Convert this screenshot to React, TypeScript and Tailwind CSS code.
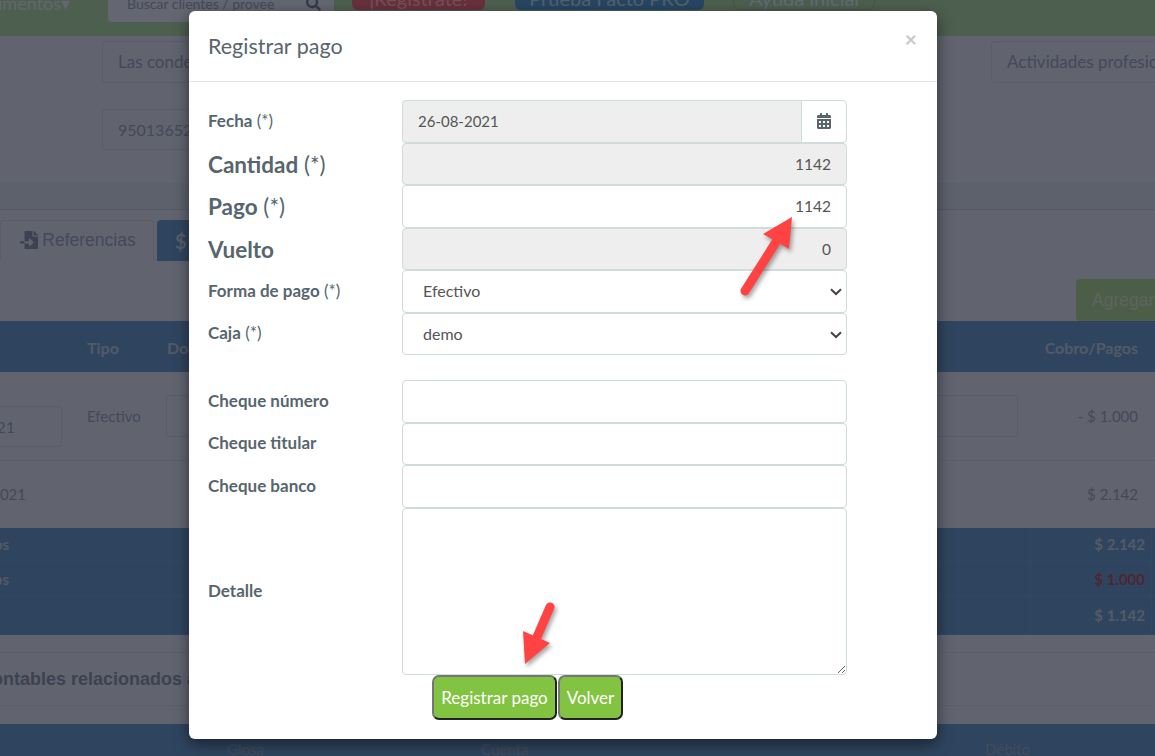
import React from "react";
import { FaCalendarAlt, FaFileImport, FaSearch } from "react-icons/fa";

const labelCls = "font-bold text-[#57666e]";
const inputCls =
  "h-[42.5px] w-full rounded-[4px] border border-[#cfdcdc] px-[15px] text-[15.5px] text-[#555] outline-none";

function Row({ label, big, req, children }: { label: string; big?: boolean; req?: boolean; children: React.ReactNode }) {
  return (
    <div className="grid grid-cols-[194px_445px] items-center">
      <div className={big ? "pt-[2px] text-[22.5px] text-[#57666e]" : "pb-[2px] text-[17px] text-[#57666e]"}>
        <span className={labelCls}>{label}</span>
        {req && " (*)"}
      </div>
      {children}
    </div>
  );
}

function Select({ value }: { value: string }) {
  return (
    <div className="relative">
      <select className={`${inputCls} appearance-none bg-white pl-[20px] text-[16px]`} defaultValue={value}>
        <option>{value}</option>
      </select>
      <svg className="pointer-events-none absolute right-[5px] top-[18px]" width="12" height="8" viewBox="0 0 12 8">
        <polyline points="1,1.2 6,6 11,1.2" fill="none" stroke="#444" strokeWidth="2" />
      </svg>
    </div>
  );
}

function Arrow({ className, points, shaft, w, h }: { className: string; points: string; shaft: string; w: number; h: number }) {
  return (
    <svg className={`${className} drop-shadow-[2px_3px_2px_rgba(0,0,0,0.35)]`} width={w} height={h} viewBox={`0 0 ${w} ${h}`}>
      <polygon points={points} fill="#ff4343" />
      <path d={shaft} stroke="#ff4343" strokeWidth="9" strokeLinecap="round" fill="none" />
    </svg>
  );
}

function Background() {
  return (
    <div className="h-[756px] w-full overflow-hidden bg-[#c2c8de] font-['Lato',sans-serif] text-[#8a90b4]">
      {/* top bar */}
      <div className="flex h-[36px] items-start overflow-hidden bg-[#9abe9e]">
        <div className="-mt-[10px] flex w-[108px] overflow-hidden text-[18px] text-[#c6cbe0]">
          <div className="flex w-[70px] justify-end overflow-hidden">
            <span className="whitespace-nowrap">Documentos▾</span>
          </div>
        </div>
        <div className="-mt-[20px] flex h-[42px] w-[226px] items-center justify-between rounded-[4px] bg-[#c8cde2] pl-[19px] pr-[13px] pt-[20px] text-[14px]">
          <span className="-mt-[16px] whitespace-nowrap">Buscar clientes / provee</span>
          <FaSearch className="-mt-[16px] text-[15px] text-[#70758f]" />
        </div>
        <div className="-mt-[18px] ml-[18px] flex h-[28px] w-[133px] items-center justify-center rounded-[6px] bg-[#d0607a] pt-[4px] text-[20px] text-[#e4a0b0]">
          ¡Regístrate!
        </div>
        <div className="-mt-[18px] ml-[30px] flex h-[28px] w-[189px] items-center justify-center rounded-[6px] bg-[#4f8cc4] pt-[4px] text-[20px] text-[#a4c0dc]">
          Prueba Facto PRO
        </div>
        <div className="-mt-[18px] ml-[29px] flex h-[28px] w-[142px] items-center justify-center rounded-[6px] border border-[#8aa890] pt-[4px] text-[20px] text-[#c8d2e6]">
          Ayuda inicial
        </div>
      </div>

      {/* form fields */}
      <div className="flex h-[147px] flex-col pt-[5px]">
        <div className="flex">
          <div className="ml-[102px] flex h-[42px] w-[300px] items-center rounded-[4px] border border-[#b4bad2] pl-[15px] text-[17px]">
            Las condes
          </div>
          <div className="ml-[589px] flex h-[42px] flex-1 items-center overflow-hidden whitespace-nowrap rounded-l-[4px] border border-r-0 border-[#b4bad2] pl-[15px] text-[17px]">
            Actividades profesionales
          </div>
        </div>
        <div className="ml-[102px] mt-[26px] flex h-[41px] w-[300px] items-center rounded-[4px] border border-[#b4bad2] pl-[15px] text-[16px]">
          950136522
        </div>
      </div>
      <div className="h-[27px] border-b border-[#acb2cc] bg-[#b8c2d8]" />

      {/* tabs */}
      <div className="flex h-[51px] items-end gap-[3px] pl-0">
        <div className="flex h-[41px] w-[154px] items-center justify-center gap-[4px] rounded-t-[4px] border border-b-0 border-[#b4bad2] pb-[2px] pl-[2px] font-['Liberation_Sans',sans-serif] text-[17.5px]">
          <FaFileImport className="text-[18px] text-[#7c82a2]" />
          Referencias
        </div>
        <div className="flex h-[41px] w-[200px] items-center rounded-t-[4px] bg-[#5e8abe] pl-[18px] text-[20px] font-bold text-[#b0bcd4]">
          $ Pagos
        </div>
      </div>

      {/* add button */}
      <div className="flex h-[60px] items-end justify-end">
        <div className="flex h-[42px] w-[79px] items-center overflow-hidden whitespace-nowrap rounded-l-[4px] bg-[#98bc90] pl-[16px] font-['Liberation_Sans',sans-serif] text-[17.5px] text-[#bcc8c0]">
          Agregar
        </div>
      </div>

      {/* payments table */}
      <div className="grid h-[51px] grid-cols-[87px_80px_1fr] items-center bg-[#5e8abe] pr-[17px] pt-[2px] text-[16px] font-bold text-[#a8b3ce]">
        <span />
        <span>Tipo</span>
        <div className="flex justify-between">
          <span>Documento</span>
          <span>Cobro/Pagos</span>
        </div>
      </div>
      <div className="grid h-[89px] grid-cols-[87px_80px_1fr] border-b border-[#b8bed6] pr-[17px] text-[15px]">
        <div className="flex items-start pt-[34px]">
          <div className="flex h-[41px] w-[62px] items-center overflow-hidden rounded-r-[4px] border border-l-0 border-[#b4bad2] text-[16px]">
            <div className="flex w-[15px] justify-end overflow-hidden">
              <span className="whitespace-nowrap">26-08-2021</span>
            </div>
          </div>
        </div>
        <span className="pt-[33px]">Efectivo</span>
        <div className="flex items-start justify-between pt-[23px]">
          <div className="-ml-[1px] h-[42px] w-[852px] rounded-[4px] border border-[#b4bad2]" />
          <span className="pt-[10px]">- $ 1.000</span>
        </div>
      </div>
      <div className="flex h-[67px] items-center justify-between pr-[17px] text-[15px]">
        <div className="flex w-[26px] justify-end overflow-hidden">
          <span className="whitespace-nowrap">26-08-2021</span>
        </div>
        <span>$ 2.142</span>
      </div>

      {/* totals */}
      <div className="grid h-[107px] grid-rows-[34px_35px_38px] bg-[#5e8abe] text-[15px] font-bold text-[#a8b3ce]">
        {[
          ["Cobros", "$ 2.142", ""],
          ["Pagos", "$ 1.000", "text-[#a04a62]"],
          ["", "$ 1.142", ""],
        ].map(([name, total, cls], i) => (
          <div key={i} className="flex items-center justify-between border-b border-[#668fc2]">
            <div className="flex w-[9px] justify-end overflow-hidden">
              <span className="whitespace-nowrap">{name}</span>
            </div>
            <div className="mr-[3px] flex h-full w-[122px] items-center justify-end border-x border-[#668fc2] pr-[6px]">
              <span className={cls}>{total}</span>
            </div>
          </div>
        ))}
      </div>

      {/* related entries */}
      <div className="mt-[17px] flex h-[54px] items-center border-y border-[#b8bed6]">
        <div className="flex w-[197px] justify-end overflow-hidden">
          <span className="whitespace-nowrap font-['Liberation_Sans',sans-serif] text-[18px] font-bold text-[#7c82a2]">
            Asientos contables relacionados a
          </span>
        </div>
      </div>
      <div className="mt-[18px] grid h-[40px] grid-cols-[227px_254px_504px_1fr] bg-[#5e8abe] pt-[14px] text-[15px] text-[#8896ba]">
        <span />
        <span>Glosa</span>
        <span>Cuenta</span>
        <span>Débito</span>
      </div>
    </div>
  );
}

export default function App() {
  return (
    <div className="relative h-[756px] w-full overflow-hidden">
      <Background />
      <div className="absolute inset-0 bg-black/50" />

      <div className="absolute left-[189px] top-[11px] flex h-[728px] w-[748px] flex-col rounded-[6px] bg-white font-['Lato',sans-serif] shadow-[0_5px_15px_rgba(0,0,0,0.5)]">
        <div className="flex h-[71px] shrink-0 items-center justify-between border-b border-[#e5e5e5] pl-[19px] pr-[20px]">
          <h4 className="text-[21.5px] text-[#57666e]">Registrar pago</h4>
          <span className="-mt-[15px] text-[21px] font-bold leading-none text-[#c8c8c8]">×</span>
        </div>

        <div className="flex flex-col pl-[19px] pt-[18px]">
          <Row label="Fecha" req>
            <div className="flex h-[42.5px]">
              <input readOnly value="26-08-2021" className={`${inputCls} rounded-r-none border-r-0 bg-[#eeeeee] text-[15px]`} />
              <div className="flex h-[42.5px] w-[46px] shrink-0 items-center justify-center rounded-r-[4px] border border-[#cfdcdc] bg-white text-[#57666e]">
                <FaCalendarAlt className="text-[16px]" />
              </div>
            </div>
          </Row>
          <Row label="Cantidad" big req>
            <input readOnly value="1142" className={`${inputCls} bg-[#eeeeee] text-right`} />
          </Row>
          <Row label="Pago" big req>
            <input readOnly value="1142" className={`${inputCls} bg-white text-right`} />
          </Row>
          <Row label="Vuelto" big>
            <input readOnly value="0" className={`${inputCls} bg-[#eeeeee] text-right`} />
          </Row>
          <Row label="Forma de pago" req>
            <Select value="Efectivo" />
          </Row>
          <Row label="Caja" req>
            <Select value="demo" />
          </Row>

          <div className="h-[25px]" />

          <Row label="Cheque número">
            <input readOnly className={`${inputCls} bg-white`} />
          </Row>
          <Row label="Cheque titular">
            <input readOnly className={`${inputCls} bg-white`} />
          </Row>
          <Row label="Cheque banco">
            <input readOnly className={`${inputCls} bg-white`} />
          </Row>
          <Row label="Detalle">
            <textarea readOnly className={`${inputCls} h-[167.5px] bg-white`} />
          </Row>

          <div className="ml-[224px] flex gap-px">
            <button className="h-[45px] w-[125px] rounded-[7px] border-2 border-[#767676] border-b-[#222222] border-r-[#222222] bg-[#82c341] text-[17px] text-white">
              Registrar pago
            </button>
            <button className="h-[45px] w-[65px] rounded-[7px] border-2 border-[#767676] border-b-[#222222] border-r-[#222222] bg-[#82c341] text-[17px] text-white">
              Volver
            </button>
          </div>
        </div>
      </div>

      {/* annotation arrows */}
      <Arrow
        className="absolute left-[735px] top-[212px]"
        w={65}
        h={90}
        points="57,5 28,22 54,37"
        shaft="M41,30 L10,79"
      />
      <Arrow
        className="absolute left-[515px] top-[598px]"
        w={45}
        h={72}
        points="10,66 8,33 35,45"
        shaft="M22,39 L35,9"
      />
    </div>
  );
}
